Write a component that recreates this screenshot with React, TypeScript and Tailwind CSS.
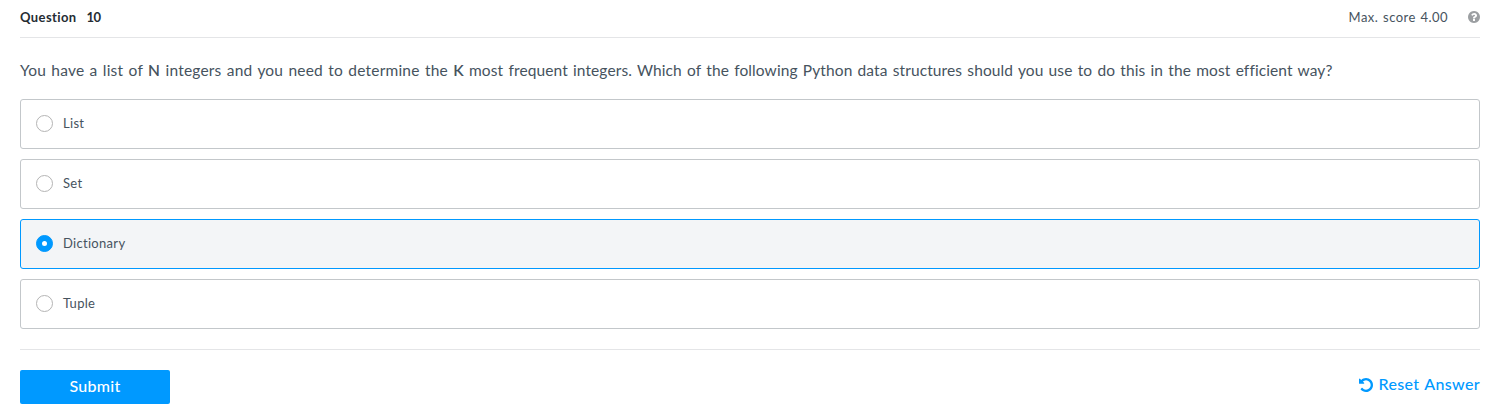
import { useState } from "react";

const options = ["List", "Set", "Dictionary", "Tuple"];

function HelpIcon() {
  return (
    <svg viewBox="128 128 1536 1536" className="mb-px size-3 fill-[#9c9fa2]" aria-hidden="true">
      <path d="M1024 1376v-192q0-14-9-23t-23-9h-192q-14 0-23 9t-9 23v192q0 14 9 23t23 9h192q14 0 23-9t9-23zm256-672q0-88-55.5-163t-138.5-116-170-41q-243 0-371 213-15 24 8 42l132 100q7 6 19 6 16 0 25-12 53-68 86-92 34-24 86-24 48 0 85.5 26t37.5 59q0 38-20 61t-68 45q-63 28-115.5 86.5t-52.5 125.5v36q0 14 9 23t23 9h192q14 0 23-9t9-23q0-19 21.5-49.5t54.5-49.5q32-18 49-28.5t46-35 44.5-48 28-60.5 12.5-81zm384 192q0 209-103 385.5t-279.5 279.5-385.5 103-385.5-103-279.5-279.5-103-385.5 103-385.5 279.5-279.5 385.5-103 385.5 103 279.5 279.5 103 385.5z" />
    </svg>
  );
}

function UndoIcon() {
  return (
    <svg viewBox="128 128 1536 1536" className="size-3.5 fill-current" aria-hidden="true">
      <path d="M1664 896q0 156-61 298t-164 245-245 164-298 61q-172 0-327-72.5t-264-204.5q-7-10-6.5-22.5t8.5-20.5l137-138q10-9 25-9 16 2 23 12 73 95 179 147t225 52q104 0 198.5-40.5t163.5-109.5 109.5-163.5 40.5-198.5-40.5-198.5-109.5-163.5-163.5-109.5-198.5-40.5q-98 0-188 35.5t-160 101.5l137 138q31 30 14 69-17 40-59 40h-448q-26 0-45-19t-19-45v-448q0-42 40-59 39-17 69 14l130 129q107-101 244.5-156.5t284.5-55.5q156 0 298 61t245 164 164 245 61 298z" />
    </svg>
  );
}

export default function App() {
  const [selected, setSelected] = useState("Dictionary");
  return (
    <main className="h-[416px] bg-white pl-5 pr-[19px] font-[Lato,sans-serif] text-[#46535e]">
      <header className="flex h-[38px] items-center justify-between border-b border-[#e4e5e7] pb-[3px] text-[13px]">
        <h1 className="flex gap-2.5 pt-0.5 font-bold text-[#252c33]">
          <span className="tracking-[0.4px]">Question</span>
          <span className="tracking-[-0.6px]">10</span>
        </h1>
        <div className="flex items-center gap-5">
          <span className="pt-0.5 tracking-[0.45px] [word-spacing:1px]">Max. score 4.00</span>
          <HelpIcon />
        </div>
      </header>

      <p className="flex h-[61px] items-center whitespace-nowrap pt-[5px] text-[15.5px] tracking-[0.1px] [word-spacing:1.15px]">
        <span>
          <span className="tracking-[0.2px]">
            You have a list of <b className="font-semibold">N</b> integers and you need to determine the{" "}
          </span>
          <b className="font-semibold">K</b> most frequent integers. Which of the following Python data structures
          should you use to do this in the most efficient way?
        </span>
      </p>

      <div className="flex flex-col gap-2.5">
        {options.map((option) => {
          const active = option === selected;
          return (
            <label
              key={option}
              className={`flex h-[50px] items-center rounded-[3px] border pl-[15px] text-[13px] tracking-[0.3px] ${
                active ? "border-[#0099ff] bg-[#f3f5f7]" : "border-[#c3c7ca] bg-white"
              }`}
            >
              <input
                type="radio"
                name="answer"
                checked={active}
                onChange={() => setSelected(option)}
                className="sr-only"
              />
              <span
                className={`mb-px mr-2.5 flex size-[17px] items-center justify-center rounded-full border ${
                  active ? "border-[#0099ff] bg-[#0099ff]" : "border-[#b4b4b4] bg-white"
                }`}
              >
                {active && <span className="size-[5px] rounded-full bg-white" />}
              </span>
              {option}
            </label>
          );
        })}
      </div>

      <footer className="mt-5 flex items-start justify-between border-t border-[#e4e5e7] pt-5">
        <button className="h-[34px] w-[150px] rounded-[2px] bg-[#0099ff] pb-0.5 text-base font-medium tracking-[0.3px] text-white">
          Submit
        </button>
        <button className="flex h-[29px] items-center gap-[5px] text-base font-medium tracking-[0.35px] text-[#0099ff] [word-spacing:1px]">
          <UndoIcon />
          <span className="pb-0.5">Reset Answer</span>
        </button>
      </footer>
    </main>
  );
}
